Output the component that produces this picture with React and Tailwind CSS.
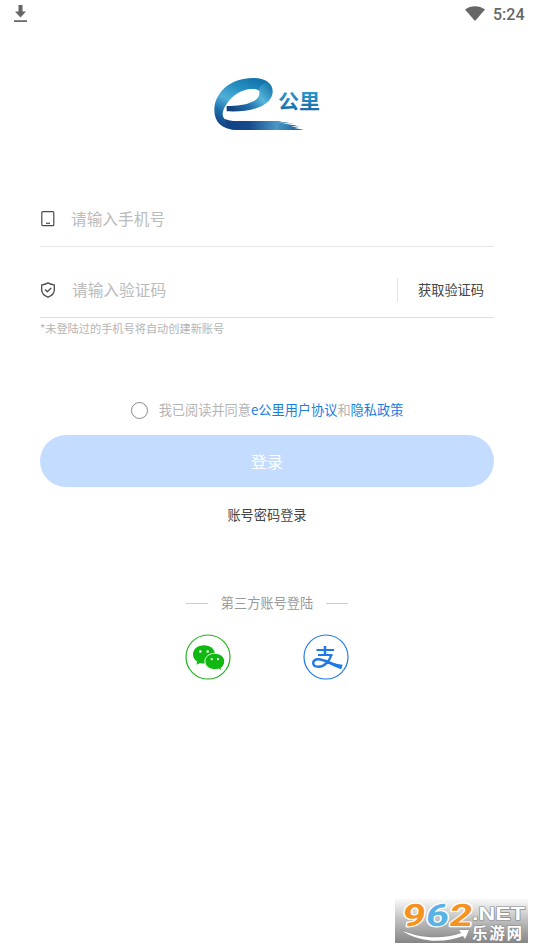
import React, { useState } from 'react';

const Logo = () => (
  <svg className="h-[70px] w-[125px]" viewBox="0 0 375 210">
    <defs>
      <linearGradient id="bowl" x1="0.7" y1="0" x2="0.25" y2="1">
        <stop offset="0" stopColor="#1475ad" />
        <stop offset="0.25" stopColor="#2690c2" />
        <stop offset="0.5" stopColor="#52afd6" />
        <stop offset="0.75" stopColor="#1b6dab" />
        <stop offset="1" stopColor="#123f80" />
      </linearGradient>
      <linearGradient id="tail" x1="0" y1="0" x2="1" y2="0">
        <stop offset="0" stopColor="#134286" />
        <stop offset="0.3" stopColor="#16498d" />
        <stop offset="0.65" stopColor="#4a96c4" />
        <stop offset="1" stopColor="#15558f" />
      </linearGradient>
      <linearGradient id="bar" x1="0" y1="0.8" x2="1" y2="0.2">
        <stop offset="0" stopColor="#123f7c" />
        <stop offset="0.35" stopColor="#2271ad" />
        <stop offset="0.65" stopColor="#55b5da" />
        <stop offset="1" stopColor="#1878ae" />
      </linearGradient>
      <linearGradient id="name" x1="0" y1="0" x2="0" y2="1">
        <stop offset="0" stopColor="#2fa6d6" />
        <stop offset="1" stopColor="#14609f" />
      </linearGradient>
    </defs>
    <path fill="url(#bowl)" d="M94 180C50 178 28 156 28 119C29 67 77 24 143 24C164 24 180 28 190 37L163 64C161 59 152 57 140 57C112 57 80 77 65 102C47 127 48 149 76 153H103L112 180Z" />
    <path fill="url(#bar)" d="M65 108C94 108 122 106 145 94C160 86 165 75 163 62C162 50 172 40 188 36C204 46 207 66 198 83C180 115 126 127 65 124Z" />
    <path fill="url(#tail)" d="M62 147C74 153 84 153 103 153H231L220 157H253L232 161H266L245 165H277L258 170H283L268 174L297 180H92C74 180 62 168 62 147Z" />
    <text x="219" y="118" fontSize="60" fontWeight="700" fill="url(#name)" textLength="126" lengthAdjust="spacingAndGlyphs" fontFamily="'Noto Sans CJK SC', sans-serif">公里</text>
  </svg>
);

const StatusBar = () => (
  <div className="flex h-7 items-center justify-between pl-3 pr-[9px] text-[#666]">
    <svg className="h-5 w-4" viewBox="0 0 16 20" fill="currentColor">
      <path d="M6.5 1H10.5V7.5H14L8.5 13.5L3 7.5H6.5ZM2 16.200H15V18H2Z" />
    </svg>
    <div className="flex items-center pt-px">
      <svg className="mr-2 h-5 w-5" viewBox="0 0 20 20" fill="currentColor">
        <path d="M0 4.5C5.5 0 14.5 0 20 4.5L10 16Z" />
      </svg>
      <span className="w-8 font-[Roboto,sans-serif] text-base font-medium">5:24</span>
    </div>
  </div>
);

const PhoneIcon = () => (
  <svg className="h-4 w-4" viewBox="0 0 16 16" fill="none" stroke="#4a4a4a" strokeWidth="1.2">
    <rect x="1.8" y="0.7" width="12" height="14" rx="1" />
    <path d="M6 12.3H10" />
  </svg>
);

const ShieldIcon = () => (
  <svg className="h-4 w-4" viewBox="0 0 16 16" fill="none" stroke="#4a4a4a" strokeWidth="1.3" strokeLinejoin="round">
    <path d="M8 .9C10 2.3 12 2.8 14.3 2.8V8C14.3 11.5 11.5 13.8 8 15.2C4.5 13.8 1.7 11.5 1.7 8V2.8C4 2.8 6 2.3 8 .9Z" />
    <path d="M5 7.5L7.3 9.8L11.2 6" />
  </svg>
);

const WechatIcon = () => (
  <svg className="h-[46px] w-[46px]" viewBox="0 0 46 46">
    <circle cx="23" cy="23" r="22" fill="white" stroke="#22b321" strokeWidth="1.2" />
    <path fill="#12b812" d="M19 11.3C12.7 11.3 8 15.2 8 20.4C8 23.4 9.6 25.9 12.3 27.6L11.3 30.8L15.2 28.9C16.5 29.3 17.7 29.5 19 29.5C25.3 29.5 30 25.5 30 20.4C30 15.2 25.3 11.3 19 11.3Z" />
    <path fill="#12b812" stroke="white" strokeWidth="1" d="M29.8 19.3C24.3 19.3 19.9 22.8 19.9 27.4C19.9 32.1 24.3 35.6 29.8 35.6C31.1 35.6 32.3 35.4 33.4 35.1L37 37L36 34C38.3 32.5 39.7 30.1 39.7 27.4C39.7 22.8 35.3 19.3 29.8 19.3Z" />
    <g fill="white">
      <circle cx="15.3" cy="17.5" r="1.3" />
      <circle cx="22.7" cy="17.5" r="1.3" />
      <circle cx="26.7" cy="25.2" r="1.1" />
      <circle cx="33" cy="25.2" r="1.1" />
    </g>
  </svg>
);

const AlipayIcon = () => (
  <svg className="h-[46px] w-[46px]" viewBox="0 0 46 46" fill="none" stroke="#1f78e8">
    <circle cx="23" cy="23" r="22" fill="white" strokeWidth="1.2" />
    <path strokeWidth="2.5" d="M22 12V21.5" />
    <path strokeWidth="1.8" d="M13.5 16H31M15 21H29.5" />
    <path strokeWidth="2.4" d="M28.3 21C26.5 27 21.5 32.8 15.5 32.8C8.5 32.8 8.5 25.3 15 25.3C21 25.3 29 30 38.5 33" />
    <path fill="#1f78e8" stroke="none" d="M25 27C30 29.3 34.5 30 39.7 30.8L38 35.3C33 33.5 28 31 24 29Z" />
  </svg>
);

const Watermark = () => (
  <svg className="absolute bottom-[6px] right-[6px] h-[44px] w-[133px] overflow-visible" viewBox="0 0 133 44">
    <defs>
      <linearGradient id="mark" x1="0" y1="0" x2="0" y2="1">
        <stop offset="0" stopColor="#fafafa" />
        <stop offset="0.5" stopColor="#bcbcbc" />
        <stop offset="1" stopColor="#858585" />
      </linearGradient>
    </defs>
    <path fill="url(#mark)" d="M0 0H133V44H0Z" />
    <g transform="translate(4 0) skewX(-8)" fontFamily="Roboto, sans-serif" fontWeight="700" fontSize="31" stroke="white" strokeWidth="2.4" paintOrder="stroke" strokeLinejoin="round">
      <text x="6" y="27" fill="#f6921e" textLength="23" lengthAdjust="spacingAndGlyphs">9</text>
      <text x="29.5" y="27" fill="#58b2e6" textLength="23" lengthAdjust="spacingAndGlyphs">6</text>
      <text x="53" y="27" fill="#f6921e" textLength="23" lengthAdjust="spacingAndGlyphs">2</text>
    </g>
    <g fill="white" stroke="#888" strokeWidth="1.2" paintOrder="stroke" fontWeight="bold">
      <text x="77" y="21" fontSize="18" textLength="53" lengthAdjust="spacingAndGlyphs" fontFamily="'Liberation Sans', sans-serif">.NET</text>
      <text x="77" y="40" fontSize="15.5" textLength="50" fontFamily="'Noto Sans CJK SC', sans-serif">乐游网</text>
      <path strokeWidth="0.8" d="M6 31C23 39 47 41 66 34L64 31L74 31L70 40L68 37C48 45 22 43 6 31Z" />
    </g>
  </svg>
);

const App = () => {
  const [agreed, setAgreed] = useState(false);

  return (
    <div className="relative h-[949px] w-[534px] overflow-hidden bg-white font-['Noto_Sans_CJK_SC',sans-serif] text-[#444]">
      <StatusBar />

      <div className="mt-[42px] flex justify-center">
        <Logo />
      </div>

      {/* Login form */}
      <form className="mx-10 mt-[51px]">
        <div className="flex h-14 items-center border-b border-[#e6e6e6]">
          <PhoneIcon />
          <span className="ml-[15px] text-[15.7px] text-[#bbb]">请输入手机号</span>
        </div>
        <div className="mt-[15px] flex h-14 items-center border-b border-[#dedede]">
          <ShieldIcon />
          <span className="ml-4 text-[15.7px] text-[#bbb]">请输入验证码</span>
          <button type="button" className="ml-auto h-6 border-l border-[#e6e6e6] pl-5 pr-[10px] text-[13.2px] leading-[22px]">获取验证码</button>
        </div>
        <p className="mt-px text-[11.2px] leading-[18px] text-[#b5b5b5]">*未登陆过的手机号将自动创建新账号</p>

        <div className="mt-[61px] flex h-6 items-center justify-center text-[13.2px] text-[#b5b5b5]">
          <button
            type="button"
            onClick={() => setAgreed(!agreed)}
            className={`mr-[11px] h-[17px] w-[17px] rounded-full border ${agreed ? 'border-[#1f78e8] bg-[#1f78e8]' : 'border-[#888]'}`}
          />
          <span>我已阅读并同意</span>
          <span className="text-[#1a7de6]">e公里用户协议</span>
          <span>和</span>
          <span className="text-[#1a7de6]">隐私政策</span>
        </div>

        <button type="button" className="mt-[13px] h-[52px] w-full rounded-full bg-[#c4dcff] text-base text-white">登录</button>
      </form>

      <div className="mt-4 text-center text-[13.2px] leading-6">账号密码登录</div>

      {/* Third party login */}
      <div className="mt-16 flex h-6 items-center justify-center gap-[13px] text-[13.2px] text-[#999]">
        <span className="h-px w-[22px] bg-[#ccc]" />
        <span>第三方账号登陆</span>
        <span className="h-px w-[22px] bg-[#ccc]" />
      </div>
      <div className="mt-[19px] flex justify-center gap-[72px]">
        <WechatIcon />
        <AlipayIcon />
      </div>

      <Watermark />
    </div>
  );
};

export default App;
